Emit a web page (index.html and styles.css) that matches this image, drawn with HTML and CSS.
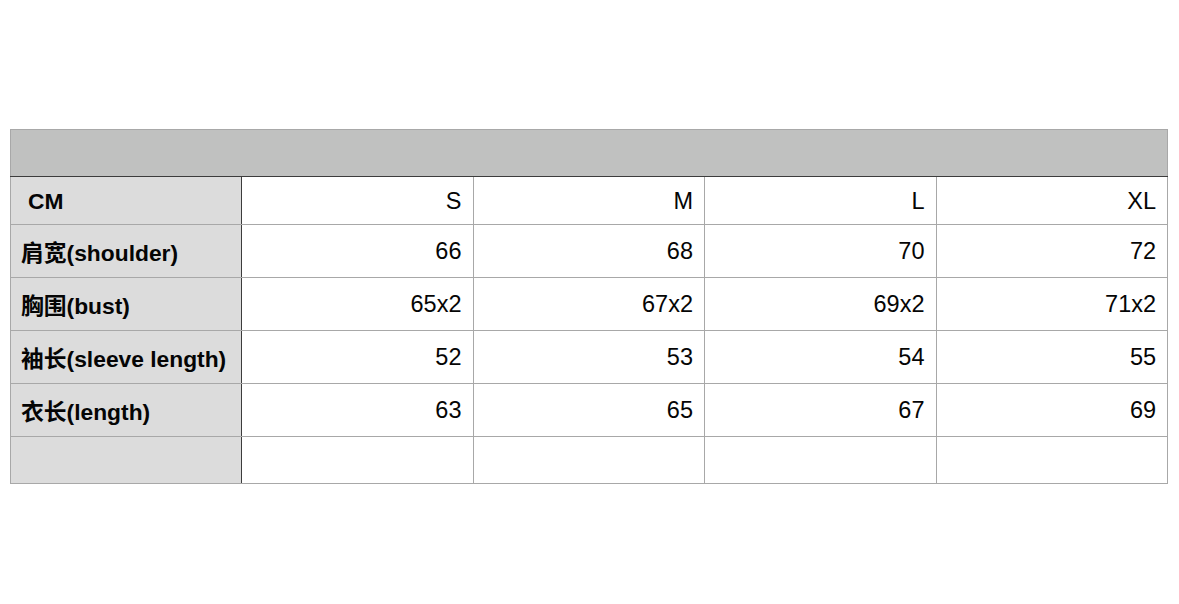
FILE: index.html
```html
<!DOCTYPE html>
<html lang="zh">
<head>
<meta charset="utf-8">
<title>Size chart</title>
<link rel="stylesheet" href="styles.css">
</head>
<body>
<main class="page">
  <table class="size-table">
    <colgroup>
      <col class="col-label">
      <col class="col-size">
      <col class="col-size">
      <col class="col-size">
      <col class="col-size">
    </colgroup>
    <thead>
      <tr class="title-row"><th colspan="5"></th></tr>
      <tr class="head-row">
        <th class="label cm">CM</th>
        <th class="num">S</th>
        <th class="num">M</th>
        <th class="num">L</th>
        <th class="num">XL</th>
      </tr>
    </thead>
    <tbody>
      <tr class="row">
        <th class="label">肩宽(shoulder)</th>
        <td class="num">66</td><td class="num">68</td><td class="num">70</td><td class="num">72</td>
      </tr>
      <tr class="row">
        <th class="label">胸围(bust)</th>
        <td class="num">65x2</td><td class="num">67x2</td><td class="num">69x2</td><td class="num">71x2</td>
      </tr>
      <tr class="row">
        <th class="label">袖长(sleeve length)</th>
        <td class="num">52</td><td class="num">53</td><td class="num">54</td><td class="num">55</td>
      </tr>
      <tr class="row">
        <th class="label">衣长(length)</th>
        <td class="num">63</td><td class="num">65</td><td class="num">67</td><td class="num">69</td>
      </tr>
      <tr class="row empty">
        <th class="label"></th>
        <td></td><td></td><td></td><td></td>
      </tr>
    </tbody>
  </table>
</main>
</body>
</html>
```

FILE: styles.css
```css
html, body {
  margin: 0;
  padding: 0;
  background: #ffffff;
}

.page {
  padding: 129px 0 0 10px;
  font-family: "Liberation Sans", Arial, "Noto Sans CJK SC", sans-serif;
  color: #050505;
}

.size-table {
  border-collapse: collapse;
  table-layout: fixed;
  width: 1157px;
  font-size: 23.5px;
}

.col-label { width: 231px; }
.col-size { width: 231.5px; }

.size-table th,
.size-table td {
  border: 1px solid #a8a8a8;
  padding: 0 11px;
  font-weight: normal;
}

.title-row th {
  height: 46px;
  background: #c0c1c0;
  border-bottom: 1px solid #3c3c3c;
}

.head-row th {
  height: 45px;
  padding-top: 2px;
}

.row th,
.row td {
  height: 52px;
}

.row.empty th,
.row.empty td {
  height: 46px;
}

.label {
  background: #dcdcdc;
  text-align: left;
  font-size: 22.8px;
  font-weight: bold !important;
  border-right: 1px solid #3c3c3c !important;
  white-space: nowrap;
  padding-left: 10px !important;
}

.label.cm {
  padding-left: 17px !important;
}

.num {
  text-align: right;
}
```
